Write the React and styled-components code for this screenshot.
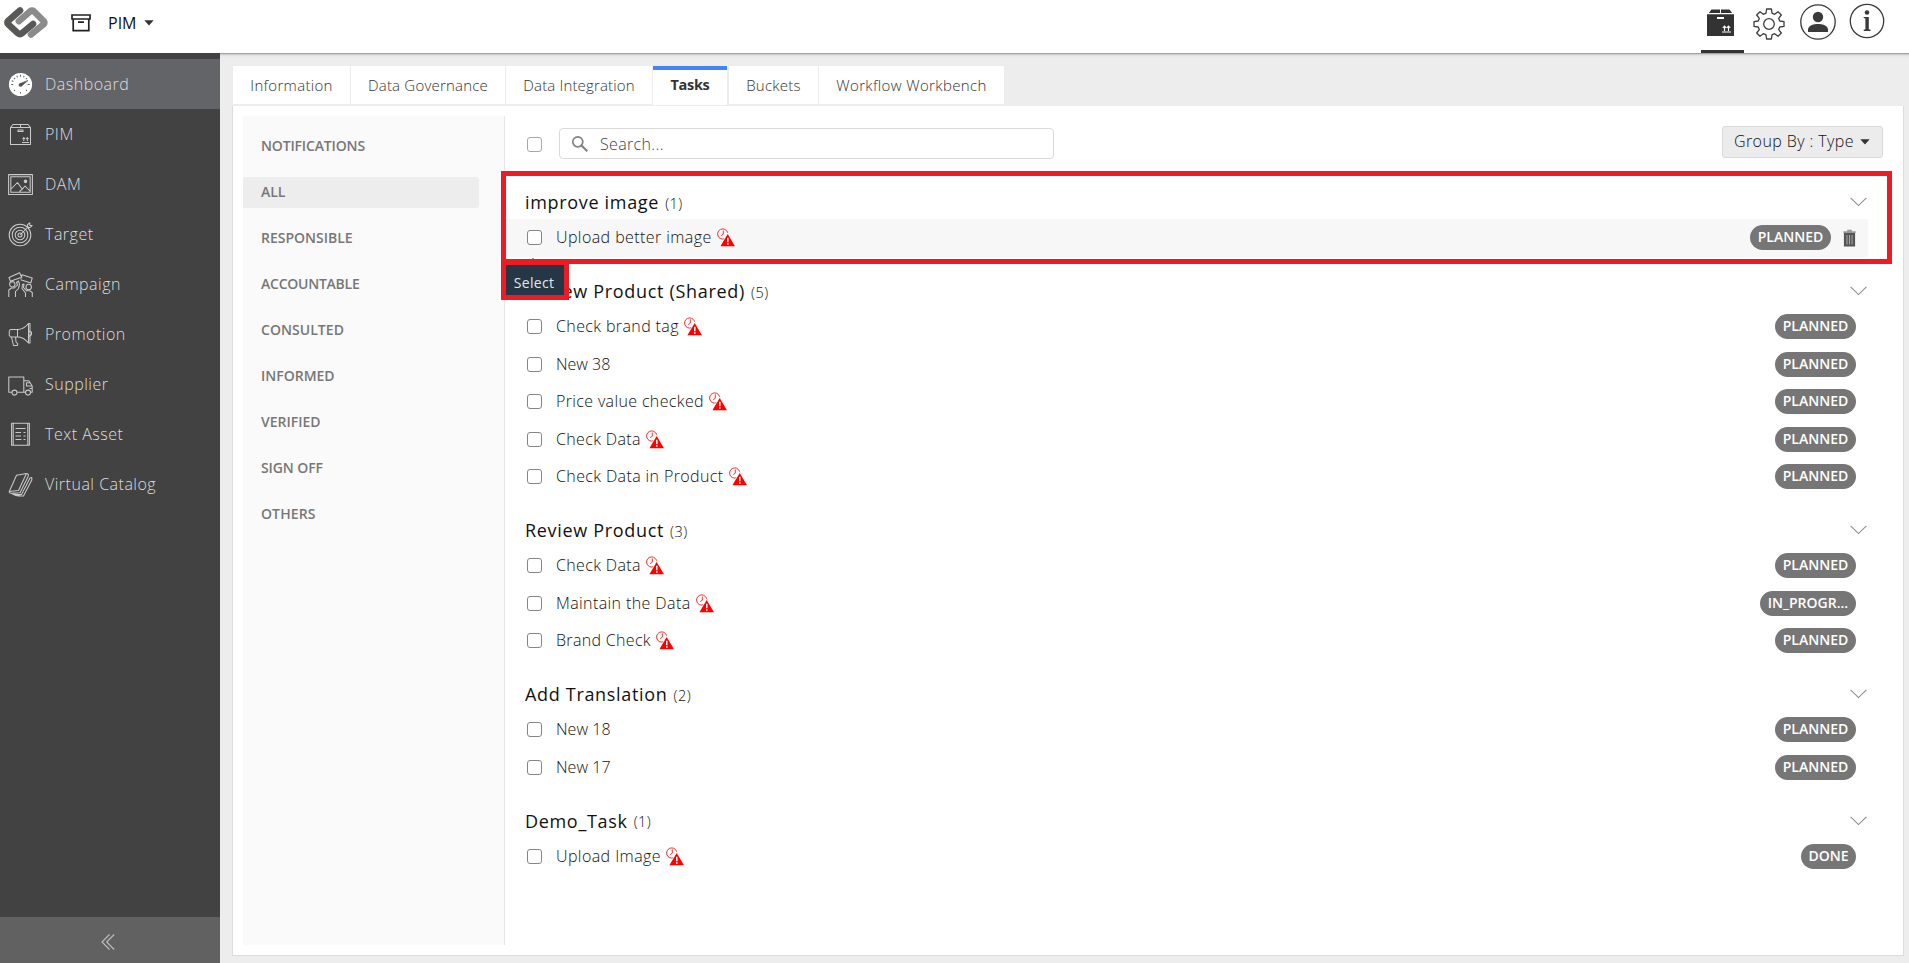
import React from "react";
import styled, { createGlobalStyle } from "styled-components";

const GlobalStyle = createGlobalStyle`
  * { box-sizing: border-box; }
  html, body, #root { height: 100%; }
  body {
    margin: 0;
    overflow: hidden;
    background: #ededed;
    color: #111;
    font-family: "Open Sans", sans-serif;
    font-weight: 300;
  }
  svg { display: block; flex: none; }
`;

const Page = styled.div`
  height: 963px;
  display: flex;
  flex-direction: column;
`;
const Header = styled.header`
  height: 53px;
  flex: none;
  display: flex;
  justify-content: space-between;
  background: #fff;
  box-shadow: 0 1px 0 #a2a2a2, 0 2px 1px #cfcfcf, 0 3px 2px #e2e2e2;
`;
const HeaderLeft = styled.div`
  display: flex;
  align-items: center;
  height: 46px;
  padding-left: 3px;
`;
const AppName = styled.div`
  margin: 0 7px 0 17px;
  width: 29px;
  font-size: 16px;
  font-weight: 400;
  line-height: 24px;
  color: #111;
  white-space: nowrap;
`;
const HeaderRight = styled.div`
  display: flex;
  padding-right: 24px;
`;
const HeaderTab = styled.div`
  width: 43px;
  height: 53px;
  padding: 9px 0 0 6px;
  border-bottom: 3px solid #333;
`;
const HeaderIcon = styled.div`
  padding-top: ${(p) => p.$top}px;
  margin-left: ${(p) => p.$left}px;
`;

const Body = styled.div`
  flex: 1;
  display: flex;
  min-height: 0;
`;
const Sidebar = styled.nav`
  width: 220px;
  flex: none;
  position: relative;
  padding-top: 6px;
  display: flex;
  flex-direction: column;
  background: #424242;
`;
const NavItem = styled.div`
  height: 50px;
  display: flex;
  align-items: center;
  padding-left: 8px;
  gap: 12px;
  font-size: 16px;
  line-height: 22px;
  letter-spacing: 0.5px;
  color: #dedede;
  background: ${(p) => (p.$active ? "#636468" : "transparent")};
`;
const Collapse = styled.div`
  margin-top: auto;
  height: 46px;
  padding: 17px 0 0 101px;
  background: #616161;
`;

const Content = styled.main`
  flex: 1;
  min-width: 0;
  padding: 13px 5px 7px 12px;
  display: flex;
  flex-direction: column;
`;
const Tabs = styled.div`
  display: flex;
  gap: 1px;
  height: 39px;
  padding-left: 1px;
`;
const Tab = styled.div`
  width: ${(p) => p.$w}px;
  height: ${(p) => (p.$active ? 39 : 38)}px;
  margin-right: ${(p) => (p.$active ? 1 : 0)}px;
  border-top: ${(p) => (p.$active ? "4px solid #4285f4" : "0")};
  padding-top: ${(p) => (p.$active ? 5 : 9)}px;
  background: #fff;
  text-align: center;
  font-size: ${(p) => (p.$active ? 14.5 : 15)}px;
  line-height: 20px;
  font-weight: ${(p) => (p.$active ? 700 : 300)};
  color: #333;
  letter-spacing: ${(p) => p.$ls}px;
  white-space: nowrap;
`;
const Panel = styled.section`
  flex: 1;
  margin-top: 1px;
  display: flex;
  padding: 10px 0 10px 10px;
  background: #fff;
  border: 1px solid #dcdcdc;
  border-top: 0;
  min-height: 0;
`;
const Filters = styled.aside`
  width: 262px;
  flex: none;
  display: flex;
  flex-direction: column;
  gap: 15px;
  padding: 15px 25px 0 0;
  background: #fafafa;
  border-right: 1px solid #e7e7e7;
`;
const Filter = styled.div`
  height: 31px;
  padding-left: 18px;
  border-radius: 0 3px 3px 0;
  font-size: 14px;
  font-weight: 600;
  line-height: 30px;
  color: #777;
  letter-spacing: ${(p) => p.$ls}px;
  background: ${(p) => (p.$active ? "#ededed" : "transparent")};
`;

const Main = styled.div`
  flex: 1;
  min-width: 0;
  padding-right: 35px;
`;
const Toolbar = styled.div`
  display: flex;
  align-items: flex-start;
  height: 69px;
  padding: 10px 0 0 22px;
  margin-right: -15px;
`;
const Check = styled.span`
  width: 15px;
  height: 15px;
  flex: none;
  border: 1px solid ${(p) => (p.$light ? "#a8a8a8" : "#858585")};
  border-radius: 3px;
  background: #fff;
  margin-top: ${(p) => (p.$light ? 11 : 0)}px;
`;
const Search = styled.div`
  width: 495px;
  height: 31px;
  margin: 2px 0 0 17px;
  border: 1px solid #d9d9d9;
  border-radius: 4px;
  display: flex;
  align-items: center;
  padding: 0 0 0 11px;
  gap: 11px;
  font-size: 16px;
  letter-spacing: 0.35px;
  color: #444;
`;
const GroupBy = styled.div`
  margin-left: auto;
  width: 161px;
  height: 32px;
  border: 1px solid #dadada;
  border-radius: 3px;
  background: #ececec;
  display: flex;
  align-items: center;
  justify-content: space-between;
  padding: 0 12px 0 11px;
  font-size: 16px;
  line-height: 28px;
  letter-spacing: 0.4px;
  white-space: nowrap;
`;
const GroupByLabel = styled.span`
  padding-bottom: 2px;
`;
const Group = styled.div`
  position: relative;
  margin-bottom: 17.5px;
`;
const GroupHead = styled.div`
  height: 34px;
  display: flex;
  align-items: center;
  padding: 0 1px 0 20px;
`;
const GroupTitle = styled.div`
  font-size: 18px;
  line-height: 34px;
  font-weight: 400;
  white-space: pre;
  letter-spacing: 0.68px;
`;
const Count = styled.span`
  margin-left: 6px;
  padding-top: 2px;
  font-size: 14.5px;
  letter-spacing: 0.5px;
`;
const ChevronSlot = styled.div`
  margin-left: auto;
`;
const Row = styled.div`
  height: 37.5px;
  display: flex;
  align-items: center;
  padding: 0 12px 0 22px;
  background: ${(p) => (p.$hover ? "#f7f7f7" : "transparent")};
`;
const RowLabel = styled.div`
  margin: 0 5px 1px 14px;
  font-size: 16px;
  line-height: 22px;
  white-space: nowrap;
  letter-spacing: ${(p) => p.$ls}px;
`;
const Badge = styled.span`
  margin-left: auto;
  width: ${(p) => p.$w}px;
  height: 25px;
  border-radius: 13px;
  background: #767676;
  color: #fff;
  font-size: 14px;
  font-weight: 600;
  line-height: 24px;
  text-align: center;
  white-space: nowrap;
`;
const TrashSlot = styled.span`
  margin-left: 12px;
`;
const Highlight = styled.div`
  position: absolute;
  left: -4px;
  top: -14px;
  width: 1391px;
  height: 93px;
  border: 5px solid #ed1c24;
  z-index: 2;
`;
const Tooltip = styled.div`
  position: absolute;
  left: -4px;
  top: 75px;
  z-index: 3;
  width: 68px;
  height: 40px;
  border: 5px solid #ed1c24;
  background: #253746;
  color: #e4e7ea;
  font-size: 14px;
  font-weight: 400;
  line-height: 35px;
  letter-spacing: 0.3px;
  text-indent: -2px;
  text-align: center;
`;
const TooltipTip = styled.div`
  position: absolute;
  left: 21px;
  top: 73px;
  border: 7px solid transparent;
  border-top-width: 0;
  border-bottom-color: #253746;
`;

const Logo = () => (
  <svg width="46" height="36" viewBox="3 5 46 36" fill="none" strokeWidth="6.6" strokeLinecap="round" strokeLinejoin="round">
    <path d="M31 34.5 43.6 24.3Q45 22.6 43.6 21L34 11.5Q32 10 30 11.5L18.8 21.2" stroke="#8b8b8b" />
    <path d="M20 10.5 8.3 20.7Q6.5 22.4 8.3 24.3L18 33.3Q20 35 22 33.3L33 24" stroke="#585856" />
  </svg>
);
const Archive = () => (
  <svg width="20" height="20" viewBox="0 0 20 20" fill="none" stroke="#222" strokeWidth="1.7">
    <path d="M1 2H19V6H1ZM2.2 6V17.6H17.8V6M7 9.2H13" />
  </svg>
);
const Caret = () => (
  <svg width="10" height="6" viewBox="0 0 10 6"><path d="M.3 .2H9.7L5 5.6Z" fill="#333" /></svg>
);
const BoxSolid = () => (
  <svg width="27" height="27" viewBox="0 0 27 27">
    <path d="M0 5.2H27V27H0ZM4.5 .5H13V4H1.8ZM14 .5H22.5L25.2 4H14Z" fill="#333" />
    <path d="M10 9H17" stroke="#fff" strokeWidth="2" />
    <path d="M15 23H24M17.5 22V17M21.5 22V17M15.8 18.8 17.5 17 19.2 18.8M19.8 18.8 21.5 17 23.2 18.8" stroke="#fff" strokeWidth="1.1" fill="none" />
  </svg>
);
const Gear = () => (
  <svg width="32" height="32" viewBox="-16 -16 32 32" fill="none" stroke="#3c3c3c" strokeWidth="1.3" strokeLinejoin="round">
    <circle r="5.3" />
    <path d="M-2.4-15H2.4L3-10.8 5.6-9.7 9-12.3 12.3-9 9.7-5.6 10.8-3 15-2.4V2.4L10.8 3 9.7 5.6 12.3 9 9 12.3 5.6 9.7 3 10.8 2.4 15H-2.4L-3 10.8-5.6 9.7-9 12.3-12.3 9-9.7 5.6-10.8 3-15 2.4V-2.4L-10.8-3-9.7-5.6-12.3-9-9-12.3-5.6-9.7-3-10.8Z" />
  </svg>
);
const User = () => (
  <svg width="36" height="36" viewBox="-18 -18 36 36">
    <circle r="17.2" fill="none" stroke="#3a3a3a" strokeWidth="1.3" />
    <circle cy="-5" r="5.2" fill="#3a3a3a" />
    <path d="M-10 10V7C-9 3 -4 2 0 2S9 3 10 7V10Z" fill="#3a3a3a" />
  </svg>
);
const Info = () => (
  <svg width="36" height="36" viewBox="-18 -18 36 36">
    <circle r="16.7" fill="none" stroke="#3a3a3a" strokeWidth="1.3" />
    <circle cy="-8.5" r="2.3" fill="#3a3a3a" />
    <path d="M-3.3-4H1.8V8.3L3.5 8.8V10H-3.3V8.8L-1.6 8.3V-2.6L-3.3-3Z" fill="#3a3a3a" />
  </svg>
);

const navShapes = {
  Dashboard: (
    <>
      <circle cx="12.5" cy="12.5" r="11.6" fill="#fff" stroke="none" />
      <path d="M12.5 2.8V4.8M12.5 20V21.5M3.2 12.5H5.2M19.8 12.5H21.8M6 6 7.1 7.1M19 6 17.9 7.1M6 19 7.1 17.9M19 19 17.9 17.9M8.8 3.8 9.5 5.4M16.2 3.8 15.5 5.4M3.8 8.8 5.4 9.5" stroke="#636468" />
      <path d="M11.5 11.8 20 8.4 13.4 14.2Z" fill="#555" stroke="#555" strokeWidth="0.6" />
      <circle cx="12.4" cy="13" r="1.8" fill="#555" stroke="none" />
    </>
  ),
  PIM: <path d="M2.5 5.5 5 2.5H20L22.5 5.5V22.5H2.5ZM2.5 5.5H22.5M12.5 2.5V5.5M10 8H15V9.5H10ZM14 20.5H21M15.8 19V15.5M19.3 19V15.5M14.6 17 15.8 15.6 17 17M18.1 17 19.3 15.6 20.5 17" />,
  DAM: (
    <>
      <path d="M.6 2.6H24.4V22.4H.6ZM2.8 4.8H22.2V20.2H2.8ZM3 17 9.5 10.5 14.3 17.2 17 14 22 19M11.5 19.5 14.3 17.2" />
      <circle cx="17.5" cy="9.3" r="1.3" fill="#d0d0d0" />
    </>
  ),
  Target: (
    <>
      <circle cx="12" cy="13" r="10.8" /><circle cx="12" cy="13" r="7.8" /><circle cx="12" cy="13" r="4.8" /><circle cx="12" cy="13" r="2" />
      <path d="M12 13 20.5 4.5M19.5 5.5V2.6L21.8.8V3.4H24.2L22.2 5.5Z" />
    </>
  ),
  Campaign: (
    <>
      <path d="M1 5.5 11.5.8 13.8 5.2 2.4 9.2ZM13 6.5 14 2.8 24.2 6 22.8 11 12.6 7.8" />
      <circle cx="4.3" cy="12.3" r="2.7" /><circle cx="20.7" cy="15" r="2.7" />
      <path d="M.8 25V18L3.5 16H6.5L9.5 13 8.5 10.5 10.5 9 11.5 12.5 10.5 16.5 7.5 19.5V25M24.3 25V20.5L22 18.8H18.5L15.5 15.5 16 12 14.5 12.5 14 16.5 17.5 21V25" />
    </>
  ),
  Promotion: <path d="M2.5 7.5H10.5Q16 7 20.5 1.5V21Q16 15.5 10.5 15H2.5L1.3 13.5V9ZM9.5 7.5V15M20.5 9Q24 9 23.5 11.8T20.5 14M3.5 15 5.5 23.5H9.3L9.8 21.8 8 20 7.6 15M20.5 1.5H22V21H20.5" />,
  Supplier: (
    <>
      <path d="M4 20.2H.8V5H15.8V20.2H9.2M15.8 8.8H20.8L24.2 14V20.2H22.5M17.8 20.2H15.8M24.2 14H18.5V10.8H21.8M21.5 16.5H24" />
      <circle cx="6.5" cy="20.6" r="2.5" /><circle cx="20" cy="20.6" r="2.5" />
    </>
  ),
  "Text Asset": <path d="M3.6 1.2H21.4V23.2H3.6ZM5.2 1.2V23.2M19.8 1.2V23.2M7.5 6.5H17.5M7.5 10.5H13M7.5 14H13M15.5 14H17.5M7.5 17.5H13.5M15.5 17.5H17.5M15.5 10.5H17.5" />,
  "Virtual Catalog": <path d="M8.5 3.3 18.5 1.5 10.5 18.5 1.3 19.5ZM1.3 19.5Q1 21.5 3.5 21.3L12 20.8 20.3 4.3M3.5 21.3Q7 23 13.5 22.5L22 6M18.5 1.5 20.3 2.2V4.3M3.5 21.3Q8 24.5 15.5 24L23.8 8V5.5L22 6" />,
};
const NavIcon = ({ name }) => (
  <svg width="25" height="25" viewBox="0 0 25 25" fill="none" stroke="#cacaca" strokeWidth="1.05" strokeLinejoin="round">
    {navShapes[name]}
  </svg>
);
const Lens = () => (
  <svg width="18" height="18" viewBox="0 0 18 18" fill="none" stroke="#808080">
    <circle cx="6.8" cy="6.8" r="5" strokeWidth="1.7" /><path d="M10.5 10.5 16.3 16.3" strokeWidth="2.1" />
  </svg>
);
const Chevron = () => (
  <svg width="17" height="10" viewBox="0 0 17 10"><path d="M.6 .8 8.5 8.6 16.4 .8" fill="none" stroke="#8c8c8c" strokeWidth="1.1" /></svg>
);
const Overdue = () => (
  <svg width="18" height="19" viewBox="0 0 18 19">
    <circle cx="5.7" cy="6" r="5.1" fill="none" stroke="#ff2a2a" strokeWidth="1" />
    <path d="M6.3 2.5V6.2L4.2 7.6" fill="none" stroke="#ff2a2a" strokeWidth="1" />
    <path d="M10.7 4.2 18.5 18.6H2.7Z" fill="#fff" />
    <path d="M10.7 6 18 18.3H3.4Z" fill="#f00" />
    <path d="M10.8 9.8V14.2M10.8 15.3V16.8" stroke="#fff" strokeWidth="1.5" />
  </svg>
);
const Trash = () => (
  <svg width="13" height="18" viewBox="0 0 13 18">
    <path d="M.3 2.2H12.7V4H.3ZM4.2 2.2V.7H8.8V2.2" fill="#999" /><path d="M.9 4H12.1V17.5H.9Z" fill="#555" />
    <path d="M4 6V15.5M6.5 6V15.5M9 6V15.5" stroke="#aaa" />
  </svg>
);
const Collapser = () => (
  <svg width="14" height="16" viewBox="0 0 14 16" fill="none" stroke="#bcbcbc" strokeWidth="1.2"><path d="M8.5 .5 1 8 8.5 15.5M13.2 .5 5.7 8 13.2 15.5" /></svg>
);

const nav = ["Dashboard", "PIM", "DAM", "Target", "Campaign", "Promotion", "Supplier", "Text Asset", "Virtual Catalog"];
const tabs = [
  ["Information", 117, 0.3], ["Data Governance", 154, 0.2], ["Data Integration", 146, 0.15],
  ["Tasks", 74, -0.3], ["Buckets", 89, 0.25], ["Workflow Workbench", 185, 0.36],
];
const filters = [
  ["NOTIFICATIONS", -0.15], ["ALL", 0], ["RESPONSIBLE", 0], ["ACCOUNTABLE", -0.25], ["CONSULTED", 0.05],
  ["INFORMED", 0], ["VERIFIED", 0], ["SIGN OFF", -0.1], ["OTHERS", 0.1],
];
const groups = [
  { title: "improve image", rows: [["Upload better image", true, "PLANNED", 0.42]] },
  { title: "Review Product (Shared)", rows: [["Check brand tag", true, "PLANNED", 0.38], ["New 38", false, "PLANNED", 0], ["Price value checked", true, "PLANNED", 0.36], ["Check Data", true, "PLANNED", 0.36], ["Check Data in Product", true, "PLANNED", 0.38]] },
  { title: "Review Product", rows: [["Check Data", true, "PLANNED", 0.36], ["Maintain the Data", true, "IN_PROGR...", 0.4], ["Brand Check", true, "PLANNED", 0.32]] },
  { title: "Add Translation", rows: [["New 18", false, "PLANNED", 0.05], ["New 17", false, "PLANNED", 0.05]] },
  { title: "Demo_Task", rows: [["Upload Image", true, "DONE", 0.42]] },
];
const badgeWidth = { PLANNED: 81, "IN_PROGR...": 96, DONE: 55 };

export default function App() {
  return (
    <Page>
      <GlobalStyle />
      <Header>
        <HeaderLeft>
          <Logo />
          <HeaderIcon $top={0} $left={22}><Archive /></HeaderIcon>
          <AppName>PIM</AppName>
          <Caret />
        </HeaderLeft>
        <HeaderRight>
          <HeaderTab><BoxSolid /></HeaderTab>
          <HeaderIcon $top={8} $left={9}><Gear /></HeaderIcon>
          <HeaderIcon $top={4} $left={15}><User /></HeaderIcon>
          <HeaderIcon $top={3} $left={13}><Info /></HeaderIcon>
        </HeaderRight>
      </Header>
      <Body>
        <Sidebar>
          {nav.map((n) => (
            <NavItem key={n} $active={n === "Dashboard"}>
              <NavIcon name={n} />
              {n}
            </NavItem>
          ))}
          <Collapse><Collapser /></Collapse>
        </Sidebar>
        <Content>
          <Tabs>
            {tabs.map(([t, w, ls]) => <Tab key={t} $w={w} $active={t === "Tasks"} $ls={ls}>{t}</Tab>)}
          </Tabs>
          <Panel>
            <Filters>
              {filters.map(([f, ls]) => <Filter key={f} $active={f === "ALL"} $ls={ls}>{f}</Filter>)}
            </Filters>
            <Main>
              <Toolbar>
                <Check $light />
                <Search><Lens />Search...</Search>
                <GroupBy><GroupByLabel>Group By : Type</GroupByLabel><Caret /></GroupBy>
              </Toolbar>
              {groups.map((g, i) => (
                <Group key={g.title}>
                  <GroupHead>
                    <GroupTitle>{g.title}</GroupTitle>
                    <Count>({g.rows.length})</Count>
                    <ChevronSlot><Chevron /></ChevronSlot>
                  </GroupHead>
                  {g.rows.map(([label, late, state, ls]) => (
                    <Row key={label} $hover={i === 0}>
                      <Check />
                      <RowLabel $ls={ls}>{label}</RowLabel>
                      {late && <Overdue />}
                      <Badge $w={badgeWidth[state]}>{state}</Badge>
                      {i === 0 && <TrashSlot><Trash /></TrashSlot>}
                    </Row>
                  ))}
                  {i === 0 && <TooltipTip />}
                  {i === 0 && <Highlight />}
                  {i === 0 && <Tooltip>Select</Tooltip>}
                </Group>
              ))}
            </Main>
          </Panel>
        </Content>
      </Body>
    </Page>
  );
}
